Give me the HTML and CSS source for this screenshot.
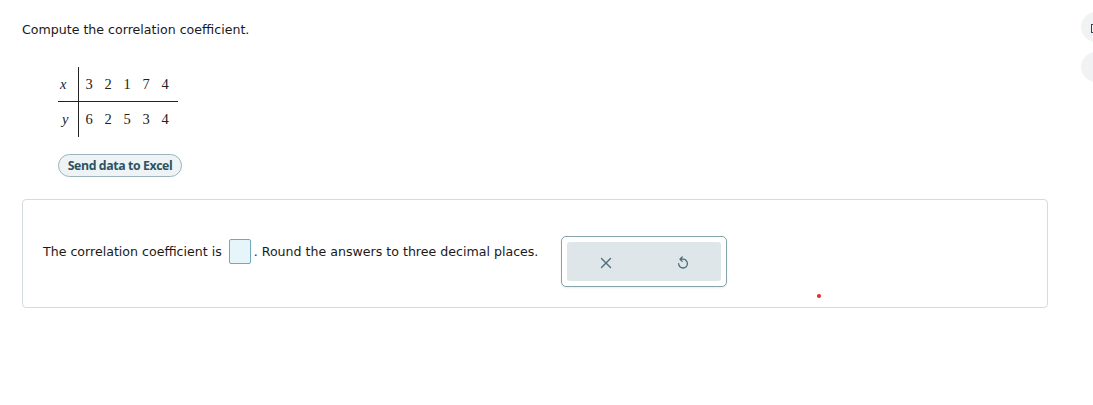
FILE: index.html
```html
<!DOCTYPE html>
<html>
<head>
<meta charset="utf-8">
<link rel="stylesheet" href="styles.css">
</head>
<body>
<div class="page">
  <p class="prompt">Compute the correlation coefficient.</p>
  <table class="data">
    <tr class="row-x">
      <td class="lbl">x</td>
      <td class="num first">3</td><td class="num">2</td><td class="num">1</td><td class="num">7</td><td class="num last">4</td>
    </tr>
    <tr class="row-y">
      <td class="lbl">y</td>
      <td class="num first">6</td><td class="num">2</td><td class="num">5</td><td class="num">3</td><td class="num last">4</td>
    </tr>
  </table>
  <button class="excel">Send data to Excel</button>
  <div class="card">
    <div class="sentence">The correlation coefficient is <span class="answer"></span>. Round the answers to three decimal places.</div>
    <div class="tools">
      <div class="tools-inner">
        <div class="tool">
          <svg width="12" height="12" viewBox="0 0 12 12"><path d="M1.5 1.5 L10.5 10.5 M10.5 1.5 L1.5 10.5" stroke="#4b6c78" stroke-width="1.4" fill="none" stroke-linecap="round"/></svg>
        </div>
        <div class="tool">
          <svg width="12" height="15" viewBox="0 0 12 15"><path d="M5.2 1 L3 3.2 L5.2 5.4 M3.2 3.2 H6 A4.4 4.4 0 1 1 1.6 7.6" stroke="#4b6c78" stroke-width="1.3" fill="none" stroke-linecap="round" stroke-linejoin="round"/></svg>
        </div>
      </div>
    </div>
    <span class="dot"></span>
  </div>
</div>
<div class="side">
  <div class="side-btn"><span class="bracket"></span></div>
  <div class="side-btn"></div>
</div>
</body>
</html>
```
FILE: styles.css
```css
html, body {
  margin: 0;
  padding: 0;
  background: #ffffff;
}
body {
  font-family: "DejaVu Sans", Verdana, sans-serif;
  color: #1a1a1a;
  overflow: hidden;
}
.page {
  padding: 22px 45px 0 22px;
}
.prompt {
  margin: 0;
  font-size: 12.6px;
  line-height: 16px;
}
.data {
  border-collapse: collapse;
  margin: 29px 0 0 36px;
  font-family: "Liberation Serif", "Times New Roman", serif;
  font-size: 14.5px;
  color: #222;
}
.data td {
  padding: 0;
}
.row-x td {
  height: 34px;
  border-bottom: 1px solid #222;
}
.row-y td {
  height: 35px;
}
.lbl {
  width: 20px;
  font-style: italic;
  text-align: left;
  padding-left: 2px !important;
  border-right: 1px solid #222;
  box-sizing: border-box;
}
.row-y .lbl { padding-left: 4px !important; }
.num {
  width: 19px;
  text-align: left;
}
.num.first {
  padding-left: 7px !important;
}
.num.last {
  width: 16px;
}
.excel {
  display: block;
  margin: 17px 0 0 36px;
  height: 23px;
  width: 124px;
  border: 1px solid #9db3bb;
  border-radius: 12px;
  background: #eef4f6;
  color: #2d5262;
  font-family: "Open Sans", Arial, sans-serif;
  font-weight: 700;
  font-size: 12.3px;
  padding: 0;
  letter-spacing: -0.4px;
}
.card {
  position: relative;
  margin-top: 22px;
  width: 1026px;
  box-sizing: border-box;
  height: 109px;
  border: 1px solid #d4dcdf;
  border-radius: 4px;
  padding: 36px 0 0 20px;
  display: flex;
  align-items: flex-start;
}
.sentence {
  font-size: 12.6px;
  line-height: 25px;
  margin-top: 3px;
  white-space: nowrap;
}
.answer {
  display: inline-block;
  vertical-align: middle;
  width: 20px;
  height: 23px;
  border: 1px solid #72aabb;
  border-radius: 2px;
  background: #e6f5fa;
  margin: -3px 3px 0 3px;
}
.tools {
  margin-left: 23px;
  width: 166px;
  height: 51px;
  box-sizing: border-box;
  border: 1px solid #86a3ab;
  border-radius: 5px;
  padding: 5px;
  background: #fff;
  box-shadow: 0 1px 2px rgba(0,0,0,0.08);
}
.tools-inner {
  display: flex;
  height: 100%;
  background: #dfe6e9;
  border-radius: 3px;
}
.tool {
  flex: 1;
  display: flex;
  align-items: center;
  justify-content: center;
  padding-top: 3px;
}
.dot {
  position: absolute;
  left: 794px;
  top: 94px;
  width: 4px;
  height: 4px;
  border-radius: 50%;
  background: #e3262b;
}
.side {
  position: absolute;
  top: 12px;
  left: 1081px;
  display: flex;
  flex-direction: column;
  gap: 10px;
}
.side-btn {
  width: 30px;
  height: 30px;
  border-radius: 50%;
  background: #f0f2f4;
  position: relative;
}
.bracket {
  position: absolute;
  left: 10px;
  top: 12px;
  width: 6px;
  height: 9px;
  border: 1.5px solid #2b4651;
  box-sizing: border-box;
}
```
